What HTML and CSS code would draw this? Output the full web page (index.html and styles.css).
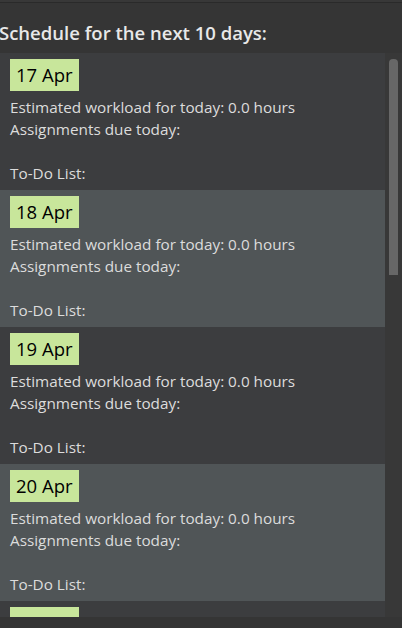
FILE: index.html
```html
<!DOCTYPE html>
<html>
<head>
<meta charset="utf-8">
<link rel="stylesheet" href="styles.css">
</head>
<body>
<div class="topbar"></div>
<h1 class="title">Schedule for the next 10 days:</h1>
<div class="panel">
  <div class="list">
    <div class="day"><div class="date">17 Apr</div><div class="info"><p>Estimated workload for today: 0.0 hours</p><p>Assignments due today:</p><p>&nbsp;</p><p>To-Do List:</p></div></div>
    <div class="day alt"><div class="date">18 Apr</div><div class="info"><p>Estimated workload for today: 0.0 hours</p><p>Assignments due today:</p><p>&nbsp;</p><p>To-Do List:</p></div></div>
    <div class="day"><div class="date">19 Apr</div><div class="info"><p>Estimated workload for today: 0.0 hours</p><p>Assignments due today:</p><p>&nbsp;</p><p>To-Do List:</p></div></div>
    <div class="day alt"><div class="date">20 Apr</div><div class="info"><p>Estimated workload for today: 0.0 hours</p><p>Assignments due today:</p><p>&nbsp;</p><p>To-Do List:</p></div></div>
    <div class="day"><div class="date">21 Apr</div><div class="info"><p>Estimated workload for today: 0.0 hours</p><p>Assignments due today:</p><p>&nbsp;</p><p>To-Do List:</p></div></div>
  </div>
  <div class="scrolltrack"><div class="thumb"></div></div>
</div>
</body>
</html>
```
FILE: styles.css
```css
html, body {
  margin: 0;
  padding: 0;
}
body {
  background: #353535;
  width: 402px;
  height: 628px;
  overflow: hidden;
  font-family: "Open Sans", "Noto Sans", sans-serif;
}
.topbar {
  height: 2px;
  border-bottom: 1px solid #2a2a2a;
  background: #383838;
}
.title {
  margin: 0;
  height: 50px;
  box-sizing: border-box;
  padding-top: 17px;
  margin-left: -1px;
  font-size: 18.5px;
  font-weight: 600;
  line-height: 26px;
  color: #e8e8e8;
}
.panel {
  display: flex;
  height: 564px;
}
.list {
  width: 385px;
  height: 564px;
  overflow: hidden;
}
.day {
  height: 137px;
  box-sizing: border-box;
  padding: 6px 10px;
  background: #3c3d3f;
}
.day.alt {
  background: #505557;
}
.date {
  display: inline-block;
  height: 32px;
  line-height: 32px;
  padding: 0 6px;
  background: #c8e69b;
  color: #000;
  font-size: 18.5px;
  font-weight: 500;
}
.info {
  margin-top: 5px;
  color: #dcdcdc;
  font-size: 15.3px;
  line-height: 22px;
}
.info p {
  margin: 0;
}
.scrolltrack {
  width: 17px;
  background: #383838;
  padding-top: 6px;
  box-sizing: border-box;
}
.thumb {
  margin-left: 4px;
  width: 9px;
  height: 216px;
  background: #676767;
  border-radius: 4px 4px 0 0;
}
```
